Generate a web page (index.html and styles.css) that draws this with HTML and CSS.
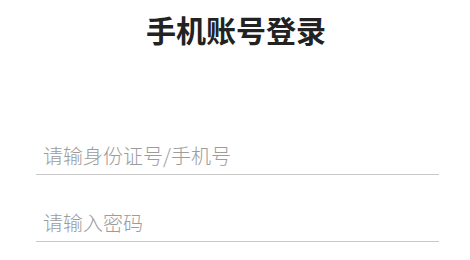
FILE: index.html
```html
<!DOCTYPE html>
<html lang="zh-CN">
<head>
<meta charset="utf-8">
<title>手机账号登录</title>
<link rel="stylesheet" href="styles.css">
</head>
<body>
<div class="page">
  <h1 class="title">手机账号登录</h1>
  <form class="form">
    <div class="field"><input class="input" type="text" placeholder="请输身份证号/手机号"></div>
    <div class="field"><input class="input" type="password" placeholder="请输入密码"></div>
  </form>
</div>
</body>
</html>
```
FILE: styles.css
```css
html, body {
  margin: 0;
  padding: 0;
  background: #ffffff;
}
.page {
  width: 470px;
  font-family: "Noto Sans CJK SC", "Noto Sans", sans-serif;
}
.title {
  margin: 0;
  padding-top: 8px;
  padding-left: 2px;
  font-size: 30px;
  line-height: 42px;
  font-weight: 700;
  color: #222222;
  text-align: center;
}
.form {
  display: flex;
  flex-direction: column;
  gap: 20px;
  padding: 78px 31px 0 36px;
}
.field {
  padding: 14px 0 4px 0;
  border-bottom: 1px solid #c8c8c8;
}
.input {
  display: block;
  width: 100%;
  box-sizing: border-box;
  border: 0;
  outline: none;
  padding: 0 7px;
  margin: 0;
  height: 28px;
  line-height: 28px;
  font-family: "Noto Sans CJK SC", "Noto Sans", sans-serif;
  font-size: 20px;
  font-weight: 300;
  color: #333333;
  background: transparent;
}
.input::placeholder {
  color: #9c9c9c;
}
```
